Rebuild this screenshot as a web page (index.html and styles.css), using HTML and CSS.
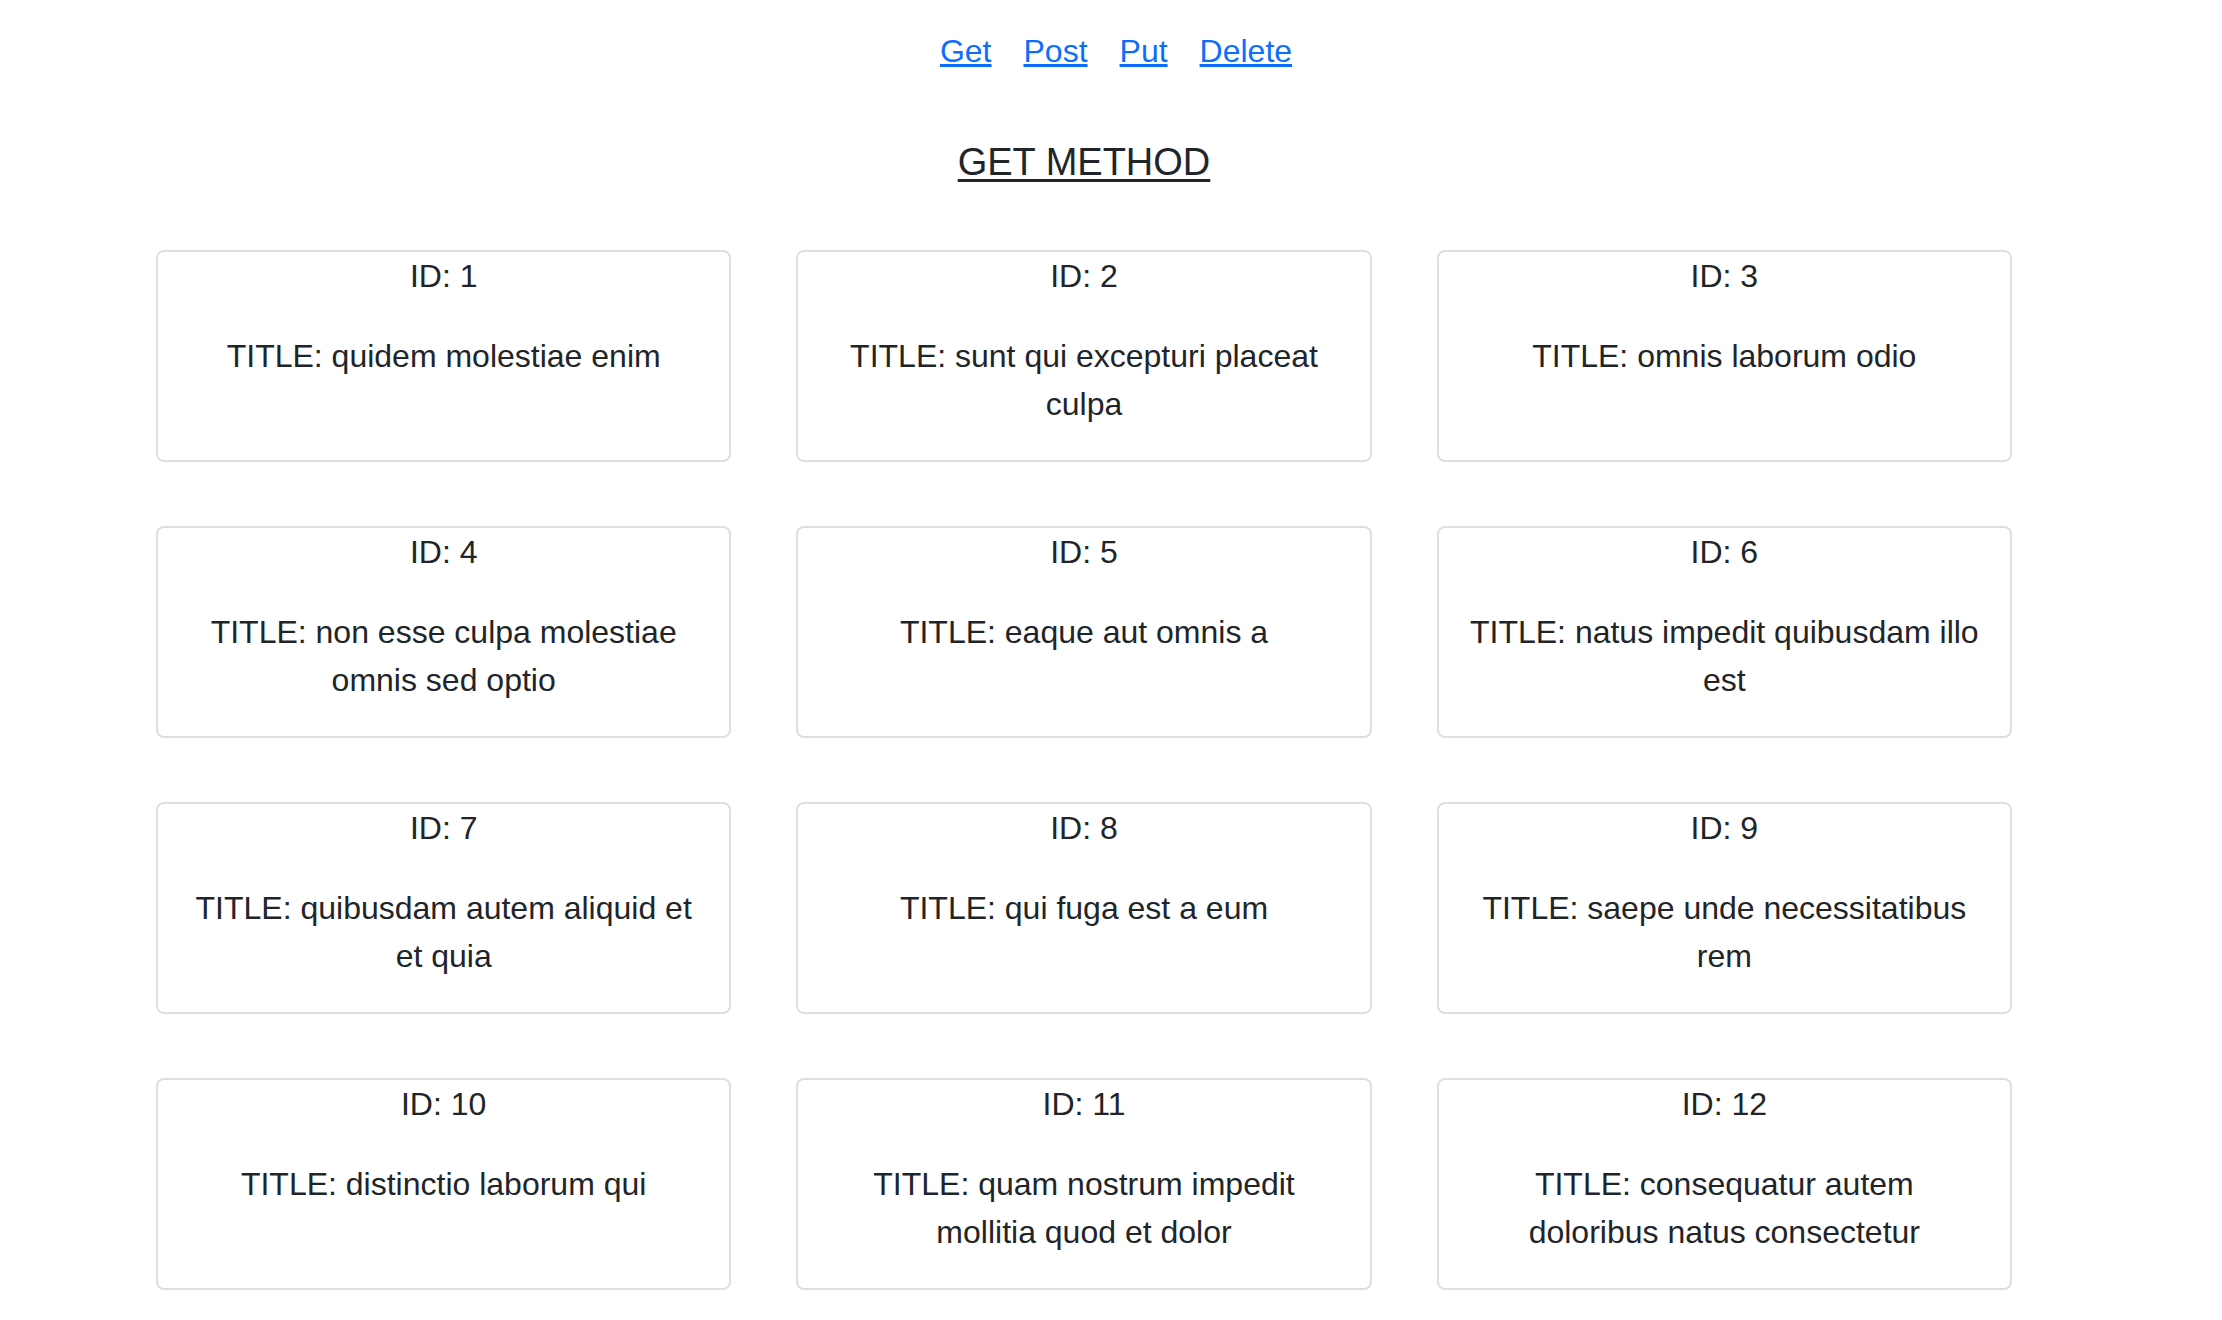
FILE: index.html
```html
<!DOCTYPE html>
<html lang="en">
<head>
<meta charset="utf-8">
<title>Get Method</title>
<link rel="stylesheet" href="styles.css">
</head>
<body>
<nav class="nav">
  <a class="nav-link" href="#">Get</a>
  <a class="nav-link" href="#">Post</a>
  <a class="nav-link" href="#">Put</a>
  <a class="nav-link" href="#">Delete</a>
</nav>
<main class="container">
  <h2 class="title">GET METHOD</h2>
  <div class="grid">
    <div class="card"><p>ID: 1</p><p>TITLE: quidem molestiae enim</p></div>
    <div class="card"><p>ID: 2</p><p>TITLE: sunt qui excepturi placeat culpa</p></div>
    <div class="card"><p>ID: 3</p><p>TITLE: omnis laborum odio</p></div>
    <div class="card"><p>ID: 4</p><p>TITLE: non esse culpa molestiae omnis sed optio</p></div>
    <div class="card"><p>ID: 5</p><p>TITLE: eaque aut omnis a</p></div>
    <div class="card"><p>ID: 6</p><p>TITLE: natus impedit quibusdam illo est</p></div>
    <div class="card"><p>ID: 7</p><p>TITLE: quibusdam autem aliquid et et quia</p></div>
    <div class="card"><p>ID: 8</p><p>TITLE: qui fuga est a eum</p></div>
    <div class="card"><p>ID: 9</p><p>TITLE: saepe unde necessitatibus rem</p></div>
    <div class="card"><p>ID: 10</p><p>TITLE: distinctio laborum qui</p></div>
    <div class="card"><p>ID: 11</p><p>TITLE: quam nostrum impedit mollitia quod et dolor</p></div>
    <div class="card"><p>ID: 12</p><p>TITLE: consequatur autem doloribus natus consectetur</p></div>
  </div>
</main>
</body>
</html>
```
FILE: styles.css
```css
html, body {
  margin: 0;
  padding: 0;
  background: #ffffff;
}

body {
  font-family: "Liberation Sans", Arial, sans-serif;
  font-size: 32px;
  line-height: 1.5;
  color: #212529;
}

.nav {
  display: flex;
  justify-content: center;
  gap: 32px;
  padding: 27px 0 0 10px;
  line-height: 48px;
}

.nav-link {
  color: #0d6efd;
  text-decoration: underline;
}

.container {
  width: 1856px;
  margin-left: 156px;
}

.title {
  margin: 65px 0 64px;
  font-size: 38px;
  font-weight: 500;
  line-height: 1.2;
  text-align: center;
  text-decoration: underline;
  text-decoration-thickness: 3px;
  text-underline-offset: 4px;
}

.grid {
  display: grid;
  grid-template-columns: repeat(3, 1fr);
  column-gap: 65px;
  row-gap: 64px;
}

.card {
  border: 2px solid #dfdfdf;
  border-radius: 8px;
  padding: 0 29px;
  text-align: center;
}

.card p {
  margin: 0 0 32px;
}
```
